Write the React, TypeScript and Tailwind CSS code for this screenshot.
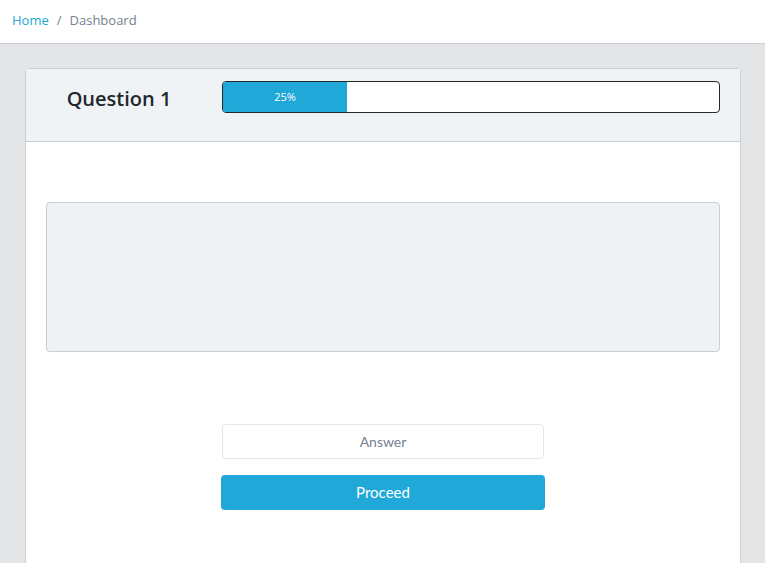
const App = () => {
  return (
    <div className="min-h-[563px] bg-[#e4e5e6] font-['Open_Sans',sans-serif] text-[#23282c]">
      {/* breadcrumb */}
      <div className="h-[44px] bg-white border-b border-[#c8ced3] flex items-center px-[12px] pb-[2px] text-[13px]">
        <span className="text-[#20a8d8]">Home</span>
        <span className="text-[#73818f] px-[8px]">/</span>
        <span className="text-[#73818f]">Dashboard</span>
      </div>

      <div className="px-[25px] pt-[24px]">
        <div className="bg-white border border-[#c8ced3] rounded-t-[4px] w-[716px] min-h-[500px]">
          <div className="bg-[#f0f3f5] border-b border-[#c8ced3] h-[73px] px-[20px] pt-[12px] flex">
            <div className="w-[146px] mr-[30px] h-[32px] flex items-center justify-center">
              <h3 className="text-[20px] font-semibold leading-none pt-[3px]">Question 1</h3>
            </div>
            <div className="flex-1">
              <div className="h-[32px] border border-[#23282c] rounded-[4px] bg-white overflow-hidden flex">
                <div className="w-[25%] bg-[#20a8d8] text-white text-[11px] flex items-center justify-center">
                  25%
                </div>
              </div>
            </div>
          </div>

          <div className="px-[20px] pt-[60px]">
            <div className="h-[150px] bg-[#eff2f4] border border-[#c8ced3] rounded-[4px]" />
            <div className="mt-[72px] flex flex-col items-center font-['Lato',sans-serif]">
              <input
                placeholder="Answer"
                className="w-[322px] h-[35px] border border-[#e4e7ea] rounded-[4px] text-center text-[14px] text-[#5c6873] placeholder:text-[#73818f] outline-none"
              />
              <button className="mt-[16px] w-[324px] h-[35px] bg-[#20a8d8] text-white text-[15px] rounded-[4px]">
                Proceed
              </button>
            </div>
          </div>
        </div>
      </div>
    </div>
  );
};

export default App;
